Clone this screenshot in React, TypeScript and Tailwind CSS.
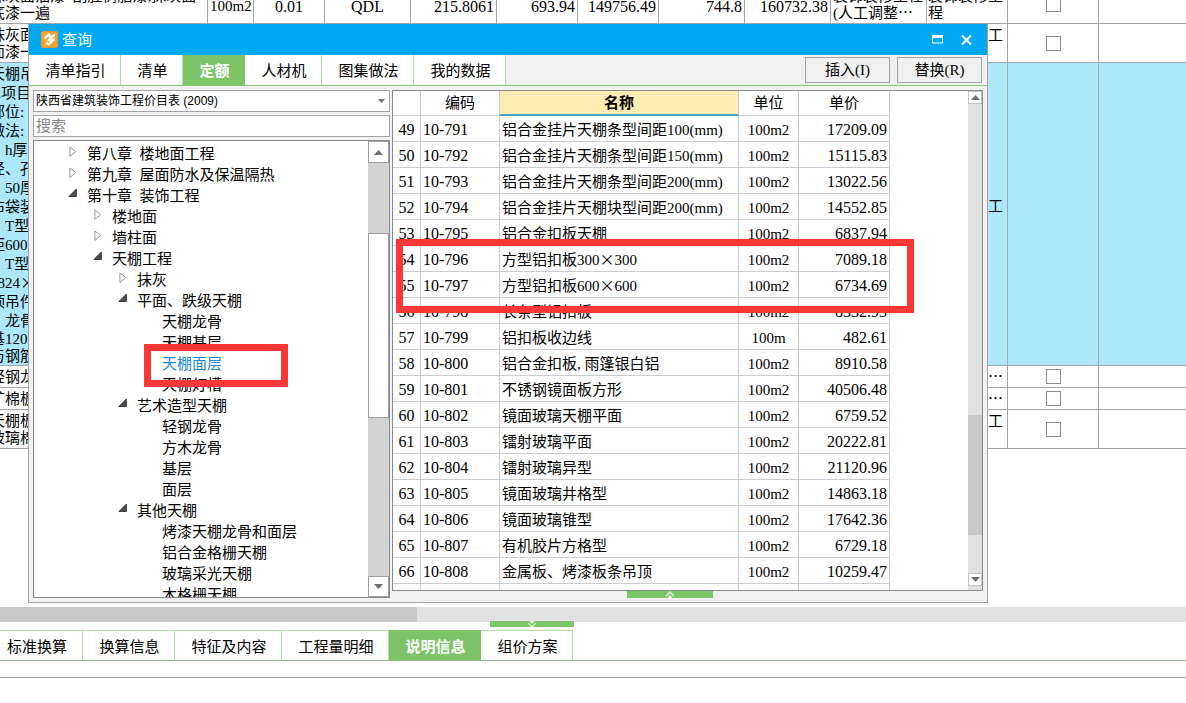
import React from "react";

const CJK = "font-['Noto_Sans_CJK_SC',sans-serif] leading-none";

type Line = string;

type SheetRow = {
  height: string;
  blue?: boolean;
  text: Line[];
  tall?: boolean;
  cells?: string[];
  major?: Line[];
  category?: Line[];
  check?: boolean;
};

const sheet: SheetRow[] = [
  {
    height: "h-[39px]",
    text: ["抹灰面油漆\u00a0 刮腥树脂漆,抹灰面", "底漆一遍"],
    cells: ["100m2", "0.01", "QDL", "215.8061", "693.94", "149756.49", "744.8", "160732.38"],
    major: ["装饰装修工程", "(人工调整⋯"],
    category: ["装饰装修工", "程"],
    check: true,
  },
  { height: "h-[39px]", text: ["抹灰面油漆", "面漆一遍"], category: ["装饰装修工", "程"], check: true },
  {
    height: "h-[303px]",
    blue: true,
    tall: true,
    text: [
      "天棚吊顶", "1.项目", "部位:", "做法:", "　h厚", "径、孔", "　50厚", "布袋装",
      "　T型", "距600", "　T型", "1824×", "顶吊件", "　龙骨", "基120", "与钢筋",
    ],
    category: ["装饰装修工", "程"],
  },
  { height: "h-[22px]", text: ["轻钢龙骨"], category: ["装饰装修⋯"], check: true },
  { height: "h-[22px]", text: ["矿棉板"], category: ["装饰装修⋯"], check: true },
  { height: "h-[39px]", text: ["天棚板", "玻璃棉"], category: ["装饰装修工", "程"], check: true },
];

type Node = { level: 0 | 1 | 2 | 3; label: string; state?: "open" | "closed"; active?: boolean };

const tree: Node[] = [
  { level: 0, label: "第八章\u00a0 楼地面工程", state: "closed" },
  { level: 0, label: "第九章\u00a0 屋面防水及保温隔热", state: "closed" },
  { level: 0, label: "第十章\u00a0 装饰工程", state: "open" },
  { level: 1, label: "楼地面", state: "closed" },
  { level: 1, label: "墙柱面", state: "closed" },
  { level: 1, label: "天棚工程", state: "open" },
  { level: 2, label: "抹灰", state: "closed" },
  { level: 2, label: "平面、跌级天棚", state: "open" },
  { level: 3, label: "天棚龙骨" },
  { level: 3, label: "天棚基层" },
  { level: 3, label: "天棚面层", active: true },
  { level: 3, label: "天棚灯槽" },
  { level: 2, label: "艺术造型天棚", state: "open" },
  { level: 3, label: "轻钢龙骨" },
  { level: 3, label: "方木龙骨" },
  { level: 3, label: "基层" },
  { level: 3, label: "面层" },
  { level: 2, label: "其他天棚", state: "open" },
  { level: 3, label: "烤漆天棚龙骨和面层" },
  { level: 3, label: "铝合金格栅天棚" },
  { level: 3, label: "玻璃采光天棚" },
  { level: 3, label: "木格栅天棚" },
];

const indent = { 0: "pl-[33px]", 1: "pl-[58px]", 2: "pl-[83px]", 3: "pl-[108px]" };

const quota: [number, string, string, string, string][] = [
  [49, "10-791", "铝合金挂片天棚条型间距100(mm)", "100m2", "17209.09"],
  [50, "10-792", "铝合金挂片天棚条型间距150(mm)", "100m2", "15115.83"],
  [51, "10-793", "铝合金挂片天棚条型间距200(mm)", "100m2", "13022.56"],
  [52, "10-794", "铝合金挂片天棚块型间距200(mm)", "100m2", "14552.85"],
  [53, "10-795", "铝合金扣板天棚", "100m2", "6837.94"],
  [54, "10-796", "方型铝扣板300×300", "100m2", "7089.18"],
  [55, "10-797", "方型铝扣板600×600", "100m2", "6734.69"],
  [56, "10-798", "长条型铝扣板", "100m2", "8332.93"],
  [57, "10-799", "铝扣板收边线", "100m", "482.61"],
  [58, "10-800", "铝合金扣板, 雨篷银白铝", "100m2", "8910.58"],
  [59, "10-801", "不锈钢镜面板方形", "100m2", "40506.48"],
  [60, "10-802", "镜面玻璃天棚平面", "100m2", "6759.52"],
  [61, "10-803", "镭射玻璃平面", "100m2", "20222.81"],
  [62, "10-804", "镭射玻璃异型", "100m2", "21120.96"],
  [63, "10-805", "镜面玻璃井格型", "100m2", "14863.18"],
  [64, "10-806", "镜面玻璃锥型", "100m2", "17642.36"],
  [65, "10-807", "有机胶片方格型", "100m2", "6729.18"],
  [66, "10-808", "金属板、烤漆板条吊顶", "100m2", "10259.47"],
];

function Mixed({ text }: { text: string }) {
  const parts = text.split("×");
  return (
    <>
      {parts.map((p, i) => (
        <React.Fragment key={i}>
          {i > 0 && <span className={CJK}>×</span>}
          {p}
        </React.Fragment>
      ))}
    </>
  );
}

function Lines({ lines, tall }: { lines: Line[]; tall?: boolean }) {
  return (
    <>
      {lines.map((l, i) => (
        <div key={i} className={tall && i < 14 ? "leading-[19px]" : "leading-[17px]"}>
          <Mixed text={l} />
        </div>
      ))}
    </>
  );
}

function SheetTable() {
  const cell = "overflow-hidden whitespace-nowrap border-r border-b border-[#a3a5a8] p-0";
  const align = [
    "text-center text-[15px]",
    "text-center text-[16px]",
    "text-center text-[16px]",
    "text-right text-[16px]",
    "text-right text-[16px]",
    "text-right text-[16px]",
    "text-right text-[16px]",
    "text-right text-[16px]",
  ];
  return (
    <table className="w-full table-fixed border-separate border-spacing-0">
      <colgroup>
        <col className="w-[220px]" />
        <col className="w-[46px]" />
        <col className="w-[71px]" />
        <col className="w-[86px]" />
        <col className="w-[86px]" />
        <col className="w-[81px]" />
        <col className="w-[81px]" />
        <col className="w-[86px]" />
        <col className="w-[86px]" />
        <col className="w-[96px]" />
        <col className="w-[81px]" />
        <col className="w-[91px]" />
        <col />
      </colgroup>
      <tbody>
        {sheet.map((r, i) => (
          <tr key={i} className={`${r.height} ${r.blue ? "bg-[#ade8fa]" : "bg-white"}`}>
            <td className={`${cell} pl-[2px] pt-[2px]`}>
              <Lines lines={r.text} tall={r.tall} />
            </td>
            {align.map((a, j) => (
              <td key={j} className={`${cell} ${a} px-[2px] pt-1 leading-[17px]`}>
                {r.cells?.[j]}
              </td>
            ))}
            <td className={`${cell} pl-[2px] pt-[2px]`}>{r.major && <Lines lines={r.major} />}</td>
            <td className={`${cell} pl-px pt-[2px]`}>{r.category && <Lines lines={r.category} />}</td>
            <td className={`${cell} text-center`}>
              {r.check && (
                <input
                  type="checkbox"
                  aria-label={r.text[0]}
                  className="mx-auto block size-[15px] appearance-none border border-[#8e8e8e] bg-white"
                />
              )}
            </td>
            <td className="border-b border-[#a3a5a8] p-0" />
          </tr>
        ))}
      </tbody>
    </table>
  );
}

function Arrow({ up, className }: { up?: boolean; className?: string }) {
  return (
    <svg viewBox="0 0 9 5" className={className ?? "h-[5px] w-[9px]"} aria-hidden="true">
      <path d={up ? "M0 5 4.5 0 9 5Z" : "M0 0h9L4.5 5Z"} fill="#6b6d70" />
    </svg>
  );
}

function Handle({ up }: { up?: boolean }) {
  return (
    <svg viewBox="0 0 12 7" className="h-[7px] w-3" aria-hidden="true">
      <g transform={up ? undefined : "rotate(180 6 3.5)"}>
        <path d="M2 5 6 1l4 4" fill="none" stroke="#e3f5dd" strokeWidth="1.3" />
        <path d="M3.500 7 6 4l2.500 3Z" fill="#f2fbef" />
      </g>
    </svg>
  );
}

function Tree() {
  return (
    <div className="flex min-h-0 flex-1 border border-[#868a90] bg-white">
      <ul className="min-w-0 flex-1 overflow-hidden pt-[2px]">
        {tree.map((n, i) => (
          <li key={i} className={`flex h-[21px] items-center whitespace-nowrap ${indent[n.level]}`}>
            <span className="flex w-[20px] shrink-0 pb-[4px]">
              {n.state === "closed" && (
                <svg viewBox="0 0 9 11" className="ml-[2px] h-[11px] w-[9px]" aria-hidden="true">
                  <path d="M.9 1v9.400L6.800 5.600Z" fill="#fff" stroke="#969696" />
                </svg>
              )}
              {n.state === "open" && (
                <svg viewBox="0 0 9 11" className="ml-px h-[11px] w-[9px]" aria-hidden="true">
                  <path d="M8.400 1V8.500H.900Z" fill="#4d4d4d" stroke="#262626" strokeWidth=".8" />
                </svg>
              )}
            </span>
            <span className={n.active ? "text-[#1b86d8]" : ""}>{n.label}</span>
          </li>
        ))}
      </ul>
      <div className="flex w-[21px] flex-col bg-[#d3d3d3]">
        <button aria-label="向上滚动" className="flex h-[22px] items-center justify-center border border-[#9b9ea3] bg-white">
          <Arrow up />
        </button>
        <div className="flex-[70]" />
        <div className="flex-[184] border border-[#9b9ea3] bg-white" />
        <div className="flex-[159]" />
        <button aria-label="向下滚动" className="flex h-[21px] items-center justify-center border border-[#9b9ea3] bg-white">
          <Arrow />
        </button>
      </div>
    </div>
  );
}

function QuotaTable() {
  const h = "border-r border-b border-[#cbcdd0] p-0 whitespace-nowrap";
  const c = "border-r border-b border-[#cbcdd0] p-0 pt-[2px] whitespace-nowrap";
  return (
    <div className="flex h-[501px] border border-[#868a90] bg-white">
      <div className="min-w-0 flex-1 overflow-hidden">
        <table className="w-[497px] table-fixed border-separate border-spacing-0">
          <colgroup>
            <col className="w-[28px]" />
            <col className="w-[79px]" />
            <col className="w-[239px]" />
            <col className="w-[60px]" />
            <col className="w-[91px]" />
          </colgroup>
          <thead>
            <tr className="h-[25px]">
              <th className={h} />
              <th className={`${h} font-normal`}>编码</th>
              <th className={`${h} border-b-2 border-b-[#4aa3c4] bg-[#ffecb3] font-bold`}>名称</th>
              <th className={`${h} font-normal`}>单位</th>
              <th className={`${h} font-normal`}>单价</th>
            </tr>
          </thead>
          <tbody>
            {quota.map(([n, code, name, unit, price]) => (
              <tr key={n} className="h-[26px]">
                <td className={`${c} text-center text-[16px]`}>{n}</td>
                <td className={`${c} pl-[2px] text-[16px]`}>{code}</td>
                <td className={`${c} pl-[2px]`}>
                  <Mixed text={name} />
                </td>
                <td className={`${c} text-center`}>{unit}</td>
                <td className={`${c} pr-[2px] text-right text-[16px]`}>{price}</td>
              </tr>
            ))}
            <tr className="h-[26px]">
              <td className={c} />
              <td className={c} />
              <td className={c} />
              <td className={c} />
              <td className={c} />
            </tr>
          </tbody>
        </table>
      </div>
      <div className="flex w-[14px] flex-col bg-[#e1e1e1]">
        <button aria-label="向上滚动" className="flex h-[13px] items-center justify-center border border-[#c4c4c4] bg-white">
          <Arrow up />
        </button>
        <div className="flex-[310]" />
        <div className="flex-[120] bg-[#c8c8c8]" />
        <div className="flex-[38]" />
        <button aria-label="向下滚动" className="mb-1 flex h-[13px] items-center justify-center border border-[#c4c4c4] bg-white">
          <Arrow />
        </button>
      </div>
    </div>
  );
}

const dialogTabs: [string, string][] = [
  ["清单指引", "w-[92px]"],
  ["清单", "w-[62px]"],
  ["定额", "w-[62px]"],
  ["人材机", "w-[77px]"],
  ["图集做法", "w-[92px]"],
  ["我的数据", "w-[92px]"],
];

function Dialog() {
  return (
    <section
      role="dialog"
      aria-label="查询"
      className="absolute left-[28px] top-[24px] flex h-[579px] w-[960px] flex-col border border-t-0 border-[#a3a5a8] bg-[#f1f1f1]"
    >
      <header className="flex h-[31px] items-center bg-[#00a9f2] pl-[12px] pr-[12px] text-white">
        <svg viewBox="0 0 17 17" className="size-[17px]" aria-hidden="true">
          <rect x=".5" y=".5" width="16" height="16" rx="1.500" fill="#f5a32f" stroke="#dd9a45" />
          <path
            d="M3.200 7.600 8 3.200 9 6l4.200-1.800L7.600 9.200 12.800 8.600 7.400 13.600 5.400 11.400"
            fill="none"
            stroke="#fff"
            strokeWidth="2.200"
            strokeLinejoin="round"
          />
        </svg>
        <h1 className="ml-[4px] flex-1 text-[15px] leading-[20px]">查询</h1>
        <button aria-label="最大化" className="flex size-[17px] items-center justify-center">
          <svg viewBox="0 0 11 9" className="h-[9px] w-[11px]" aria-hidden="true">
            <path d="M.5.5h10v7.500H.5Z" fill="none" stroke="#fff" />
            <path d="M0 0h11v3H0Z" fill="#fff" />
          </svg>
        </button>
        <button aria-label="关闭" className="ml-[12px] flex size-[17px] items-center justify-center">
          <svg viewBox="0 0 11 10" className="h-[10px] w-[11px]" aria-hidden="true">
            <path d="m1 .5 9 9m0-9-9 9" stroke="#fff" strokeWidth="2" />
          </svg>
        </button>
      </header>
      <nav className="flex h-[31px] border-b border-[#8cc47c]">
        {dialogTabs.map(([t, w]) => (
          <button
            key={t}
            className={`${w} border-r pl-[2px] pt-[2px] ${
              t === "定额" ? "border-[#7dc468] bg-[#7dc468] font-bold text-white" : "border-[#b5dda8] bg-white"
            }`}
          >
            {t}
          </button>
        ))}
        <div className="ml-auto flex gap-[7px] pr-[5px] pt-[2px]">
          <button className="h-[26px] w-[85px] border border-[#a0a3a7] bg-[#f0f0f0]">插入(I)</button>
          <button className="h-[26px] w-[85px] border border-[#a0a3a7] bg-[#f0f0f0]">替换(R)</button>
        </div>
      </nav>
      <div className="flex min-h-0 flex-1 gap-[2px] pb-1 pl-1 pr-[4px] pt-1">
        <div className="flex w-[357px] flex-col gap-[3px]">
          <div className="relative">
            <select
              aria-label="定额库"
              className="block h-[22px] w-full appearance-none border border-[#a0a3a7] bg-white pl-[2px] font-['Liberation_Sans','Noto_Sans_CJK_SC',sans-serif] text-[12px] leading-[18px]"
            >
              <option>陕西省建筑装饰工程价目表 (2009)</option>
            </select>
            <span className="pointer-events-none absolute right-[5px] top-[9px]">
              <Arrow className="block h-[4px] w-[7px]" />
            </span>
          </div>
          <input
            aria-label="搜索"
            placeholder="搜索"
            className="block h-[22px] w-full border border-[#a0a3a7] bg-white pl-[2px] placeholder:text-[#858585]"
          />
          <Tree />
        </div>
        <div className="flex min-w-0 flex-1 flex-col">
          <QuotaTable />
          <button aria-label="收起" className="ml-[235px] flex h-[7px] w-[86px] items-center justify-center bg-[#7dc468]">
            <Handle up />
          </button>
        </div>
      </div>
    </section>
  );
}

const bottomTabs: [string, string][] = [
  ["标准换算", "w-[83px] pr-[8px]"],
  ["换算信息", "w-[92px] pl-[2px]"],
  ["特征及内容", "w-[107px] pl-[2px]"],
  ["工程量明细", "w-[107px] pl-[2px]"],
  ["说明信息", "w-[92px] pl-[2px]"],
  ["组价方案", "w-[92px] pl-[2px]"],
];

export default function App() {
  return (
    <div className="relative flex h-screen flex-col overflow-hidden bg-white font-['Liberation_Serif','Noto_Sans_CJK_SC',sans-serif] text-[15px] leading-[20px] text-black">
      <main className="min-h-0 flex-1 overflow-hidden">
        <div className="-ml-3 -mt-[15px]">
          <SheetTable />
        </div>
      </main>
      <div className="h-[15px] bg-[#e1e1e1]">
        <div className="h-full w-[417px] bg-[#c9c9c9]" />
      </div>
      <button aria-label="展开" className="-mt-px ml-[490px] flex h-[6px] w-[84px] items-center justify-center bg-[#7dc468]">
        <Handle />
      </button>
      <nav className="mt-[3px] flex h-[31px] border-b border-[#8fbd84]">
        {bottomTabs.map(([t, w]) => (
          <button
            key={t}
            className={`${w} border-r border-t pt-[2px] ${
              t === "说明信息" ? "border-[#7dc468] bg-[#7dc468] font-bold text-white" : "border-[#b5dda8] bg-white"
            }`}
          >
            {t}
          </button>
        ))}
      </nav>
      <div className="h-[17px] border-b border-[#a3a5a8]" />
      <div className="h-[25px]" />
      <Dialog />
      <div className="pointer-events-none absolute left-[396px] top-[239px] h-[74px] w-[518px] border-[7px] border-[#fa3838]" />
      <div className="pointer-events-none absolute left-[144px] top-[344px] h-[43px] w-[144px] border-[7px] border-[#fa3838]" />
    </div>
  );
}
